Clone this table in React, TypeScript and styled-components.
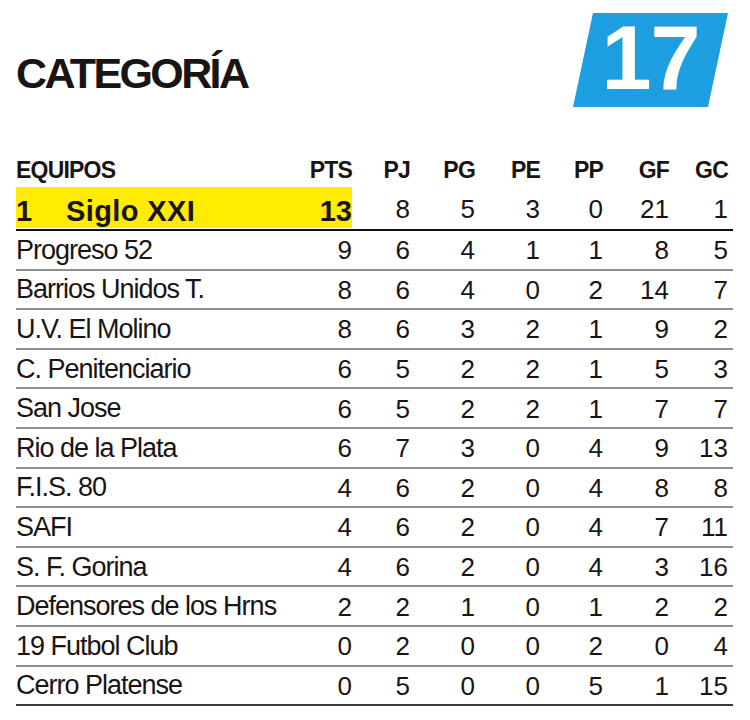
import React from "react";
import styled, { createGlobalStyle } from "styled-components";

const Global = createGlobalStyle`
  html, body { margin: 0; padding: 0; background: #ffffff; }
  body { font-family: "Liberation Sans", Arial, sans-serif; color: #1a1a1a; }
`;

const Page = styled.div`
  width: 750px;
  height: 720px;
  box-sizing: border-box;
  padding: 0 17px 0 16px;
  background: #fff;
`;

const Top = styled.header`
  display: flex;
  justify-content: space-between;
  align-items: flex-start;
  height: 150px;
`;

const Title = styled.h1`
  margin: 52px 0 0 0;
  font-family: "Liberation Sans", Arial, sans-serif;
  font-weight: 700;
  font-size: 43px;
  line-height: 1;
  letter-spacing: -2.6px;
  color: #1a1414;
`;

const Badge = styled.div`
  margin-top: 13px;
  margin-right: 5px;
  width: 155px;
  height: 94px;
  background: #1d9ee0;
  clip-path: polygon(20px 0, 100% 0, calc(100% - 20px) 100%, 0 100%);
  display: flex;
  align-items: center;
  justify-content: center;
  padding-bottom: 4px;
  box-sizing: border-box;
`;

const BadgeNum = styled.span`
  font-family: "Liberation Sans", Arial, sans-serif;
  font-weight: 700;
  font-size: 90px;
  line-height: 1;
  letter-spacing: -1px;
  color: #fff;
`;

const Table = styled.div`
  display: flex;
  flex-direction: column;
`;

const cols = "284px 52px 58px 65px 65px 63px 66px 59px";

const HeadRow = styled.div`
  display: grid;
  grid-template-columns: ${cols};
  height: 37px;
  align-items: end;
  padding-right: 5px;
  padding-bottom: 5px;
  box-sizing: border-box;
`;

const HeadCell = styled.div<{ $left?: boolean }>`
  font-family: "Liberation Sans", Arial, sans-serif;
  font-weight: 700;
  font-size: 23px;
  line-height: 1;
  letter-spacing: -0.8px;
  text-align: ${(p) => (p.$left ? "left" : "right")};
  color: #1a1414;
`;

const Row = styled.div<{ $lead?: boolean }>`
  display: grid;
  grid-template-columns: ${cols};
  padding-right: 5px;
  height: ${(p) => (p.$lead ? "44px" : "39.6px")};
  box-sizing: border-box;
  border-bottom: 2px solid ${(p) => (p.$lead ? "#111" : "#8e8e8e")};
  &:last-child { border-bottom-color: #3a3a3a; }
`;

const NameCell = styled.div<{ $lead?: boolean }>`
  display: flex;
  align-items: center;
  background: ${(p) => (p.$lead ? "#ffec00" : "transparent")};
  margin-bottom: ${(p) => (p.$lead ? "1px" : "0")};
  padding-top: ${(p) => (p.$lead ? "7px" : "1px")};
  font-family: "Liberation Sans", Arial, sans-serif;
  font-weight: ${(p) => (p.$lead ? 700 : 400)};
  font-size: ${(p) => (p.$lead ? "29px" : "27px")};
  letter-spacing: ${(p) => (p.$lead ? "0.4px" : "-1px")};
  line-height: 1;
  white-space: nowrap;
  color: #1a1414;
`;

const Rank = styled.span`
  width: 50px;
`;

const NumCell = styled.div<{ $lead?: boolean }>`
  display: flex;
  align-items: center;
  justify-content: flex-end;
  background: ${(p) => (p.$lead ? "#ffec00" : "transparent")};
  margin-bottom: ${(p) => (p.$lead ? "1px" : "0")};
  padding-top: ${(p) => (p.$lead ? "7px" : "1px")};
  font-family: "Liberation Sans", Arial, sans-serif;
  font-weight: ${(p) => (p.$lead ? 700 : 400)};
  font-size: ${(p) => (p.$lead ? "29px" : "26px")};
  line-height: 1;
  color: #1a1414;
`;

type Team = [string, number, number, number, number, number, number, number];

const teams: Team[] = [
  ["Siglo XXI", 13, 8, 5, 3, 0, 21, 1],
  ["Progreso 52", 9, 6, 4, 1, 1, 8, 5],
  ["Barrios Unidos T.", 8, 6, 4, 0, 2, 14, 7],
  ["U.V. El Molino", 8, 6, 3, 2, 1, 9, 2],
  ["C. Penitenciario", 6, 5, 2, 2, 1, 5, 3],
  ["San Jose", 6, 5, 2, 2, 1, 7, 7],
  ["Rio de la Plata", 6, 7, 3, 0, 4, 9, 13],
  ["F.I.S. 80", 4, 6, 2, 0, 4, 8, 8],
  ["SAFI", 4, 6, 2, 0, 4, 7, 11],
  ["S. F. Gorina", 4, 6, 2, 0, 4, 3, 16],
  ["Defensores de los Hrns", 2, 2, 1, 0, 1, 2, 2],
  ["19 Futbol Club", 0, 2, 0, 0, 2, 0, 4],
  ["Cerro Platense", 0, 5, 0, 0, 5, 1, 15],
];

const headers = ["PTS", "PJ", "PG", "PE", "PP", "GF", "GC"];

export default function App() {
  return (
    <>
      <Global />
      <Page>
        <Top>
          <Title>CATEGORÍA</Title>
          <Badge>
            <BadgeNum>17</BadgeNum>
          </Badge>
        </Top>
        <Table>
          <HeadRow>
            <HeadCell $left>EQUIPOS</HeadCell>
            {headers.map((h) => (
              <HeadCell key={h}>{h}</HeadCell>
            ))}
          </HeadRow>
          {teams.map((t, i) => {
            const lead = i === 0;
            const [name, ...nums] = t;
            return (
              <Row key={name} $lead={lead}>
                <NameCell $lead={lead}>
                  {lead && <Rank>1</Rank>}
                  {name}
                </NameCell>
                {nums.map((n, j) => (
                  <NumCell key={j} $lead={lead && j === 0}>
                    {n}
                  </NumCell>
                ))}
              </Row>
            );
          })}
        </Table>
      </Page>
    </>
  );
}
